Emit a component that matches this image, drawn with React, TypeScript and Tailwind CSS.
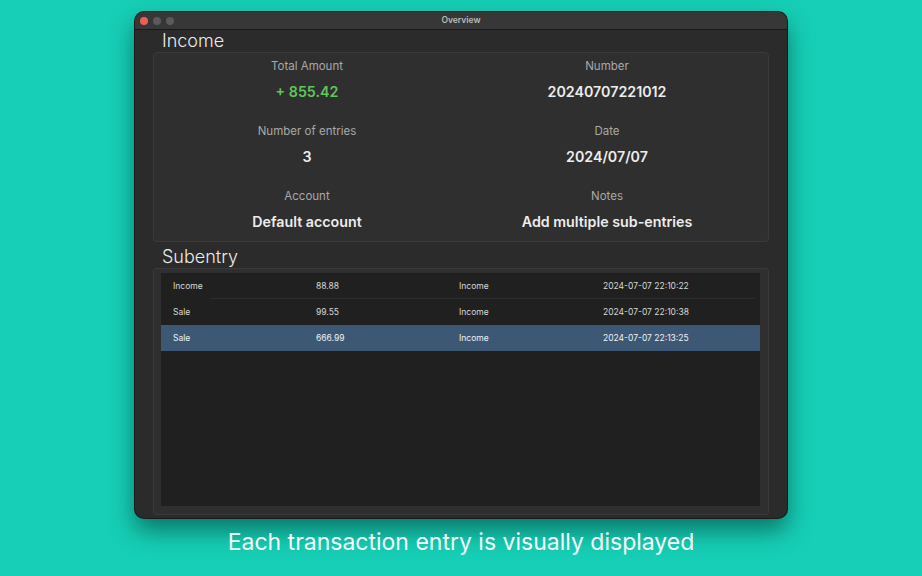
import React from "react";

interface Field {
  label: string;
  value: string;
  tone?: "income";
}

interface SubEntry {
  category: string;
  amount: string;
  kind: string;
  time: string;
}

const fields: Field[] = [
  { label: "Total Amount", value: "+ 855.42", tone: "income" },
  { label: "Number", value: "20240707221012" },
  { label: "Number of entries", value: "3" },
  { label: "Date", value: "2024/07/07" },
  { label: "Account", value: "Default account" },
  { label: "Notes", value: "Add multiple sub-entries" },
];

const subEntries: SubEntry[] = [
  { category: "Income", amount: "88.88", kind: "Income", time: "2024-07-07 22:10:22" },
  { category: "Sale", amount: "99.55", kind: "Income", time: "2024-07-07 22:10:38" },
  { category: "Sale", amount: "666.99", kind: "Income", time: "2024-07-07 22:13:25" },
];

const selectedRow = 2;

function TitleBar() {
  return (
    <div className="relative flex h-[18px] shrink-0 items-center border-b border-[#171817] bg-[#363736] pl-[5px]">
      <div className="flex gap-[5px]">
        <span className="h-[8px] w-[8px] rounded-full bg-[#ec5f57]" />
        <span className="h-[8px] w-[8px] rounded-full bg-[#595a59]" />
        <span className="h-[8px] w-[8px] rounded-full bg-[#595a59]" />
      </div>
      <div className="absolute inset-0 flex items-center justify-center text-[8.5px] font-semibold text-[#bcbcbc]">
        Overview
      </div>
    </div>
  );
}

function SectionTitle({ children }: { children: React.ReactNode }) {
  return (
    <h2 className="pl-[9px] text-[18px] font-light leading-[22px] text-[#ececec]">
      {children}
    </h2>
  );
}

function IncomeSummary() {
  return (
    <div className="grid h-[190px] grid-cols-[300px_300px] content-start gap-y-[21px] rounded-[4px] border border-[#393a39] bg-[#2e2f2e] pl-[3px] pt-[5px]">
      {fields.map((f) => (
        <div key={f.label} className="flex flex-col items-center">
          <p className="text-[11.5px] leading-[16px] text-[#a9a9a9]">{f.label}</p>
          <p
            className={
              "mt-[8px] text-[14.25px] font-semibold leading-[20px] " +
              (f.tone === "income" ? "text-[#5fc65c]" : "text-[#ededed]")
            }
          >
            {f.value}
          </p>
        </div>
      ))}
    </div>
  );
}

function SubEntryTable() {
  return (
    <div className="flex h-[247px] flex-col rounded-[3px] border border-[#393a39] bg-[#2e2f2e] pb-[8px] pl-[7px] pr-[8px] pt-[4px]">
      <div className="flex-1 bg-[#1f201f]">
        {subEntries.map((row, i) => (
          <div
            key={row.time}
            className={
              "relative grid h-[26px] grid-cols-[143px_143px_144px_1fr] items-center pl-[12px] text-[8.5px] " +
              (i === selectedRow ? "bg-[#3d5875] text-[#eef2f6]" : "text-[#d9d9d9]")
            }
          >
            <span>{row.category}</span>
            <span>{row.amount}</span>
            <span>{row.kind}</span>
            <span>{row.time}</span>
            {i < selectedRow - 1 && (
              <span className="absolute bottom-0 left-[49px] right-[5px] h-px bg-[#2b2c2b]" />
            )}
          </div>
        ))}
      </div>
    </div>
  );
}

export default function App() {
  return (
    <div
      className="flex h-[576px] w-[922px] flex-col items-center overflow-hidden bg-[#16cfb6]"
      style={{ fontFamily: "Inter, 'Liberation Sans', sans-serif" }}
    >
      <div className="mt-[12px] flex h-[506px] w-[652px] flex-col overflow-hidden rounded-[9px] bg-[#2a2b2a] shadow-[0_12px_24px_rgba(0,40,35,0.55)] ring-1 ring-[#1a1b1a]">
        <TitleBar />
        <div className="flex flex-col px-[18px]">
          <SectionTitle>Income</SectionTitle>
          <IncomeSummary />
          <div className="mt-[4px]">
            <SectionTitle>Subentry</SectionTitle>
          </div>
          <SubEntryTable />
        </div>
      </div>
      <p className="mt-[10px] text-[23px] leading-[28px] text-[#f4fbfa]">
        Each transaction entry is visually displayed
      </p>
    </div>
  );
}
